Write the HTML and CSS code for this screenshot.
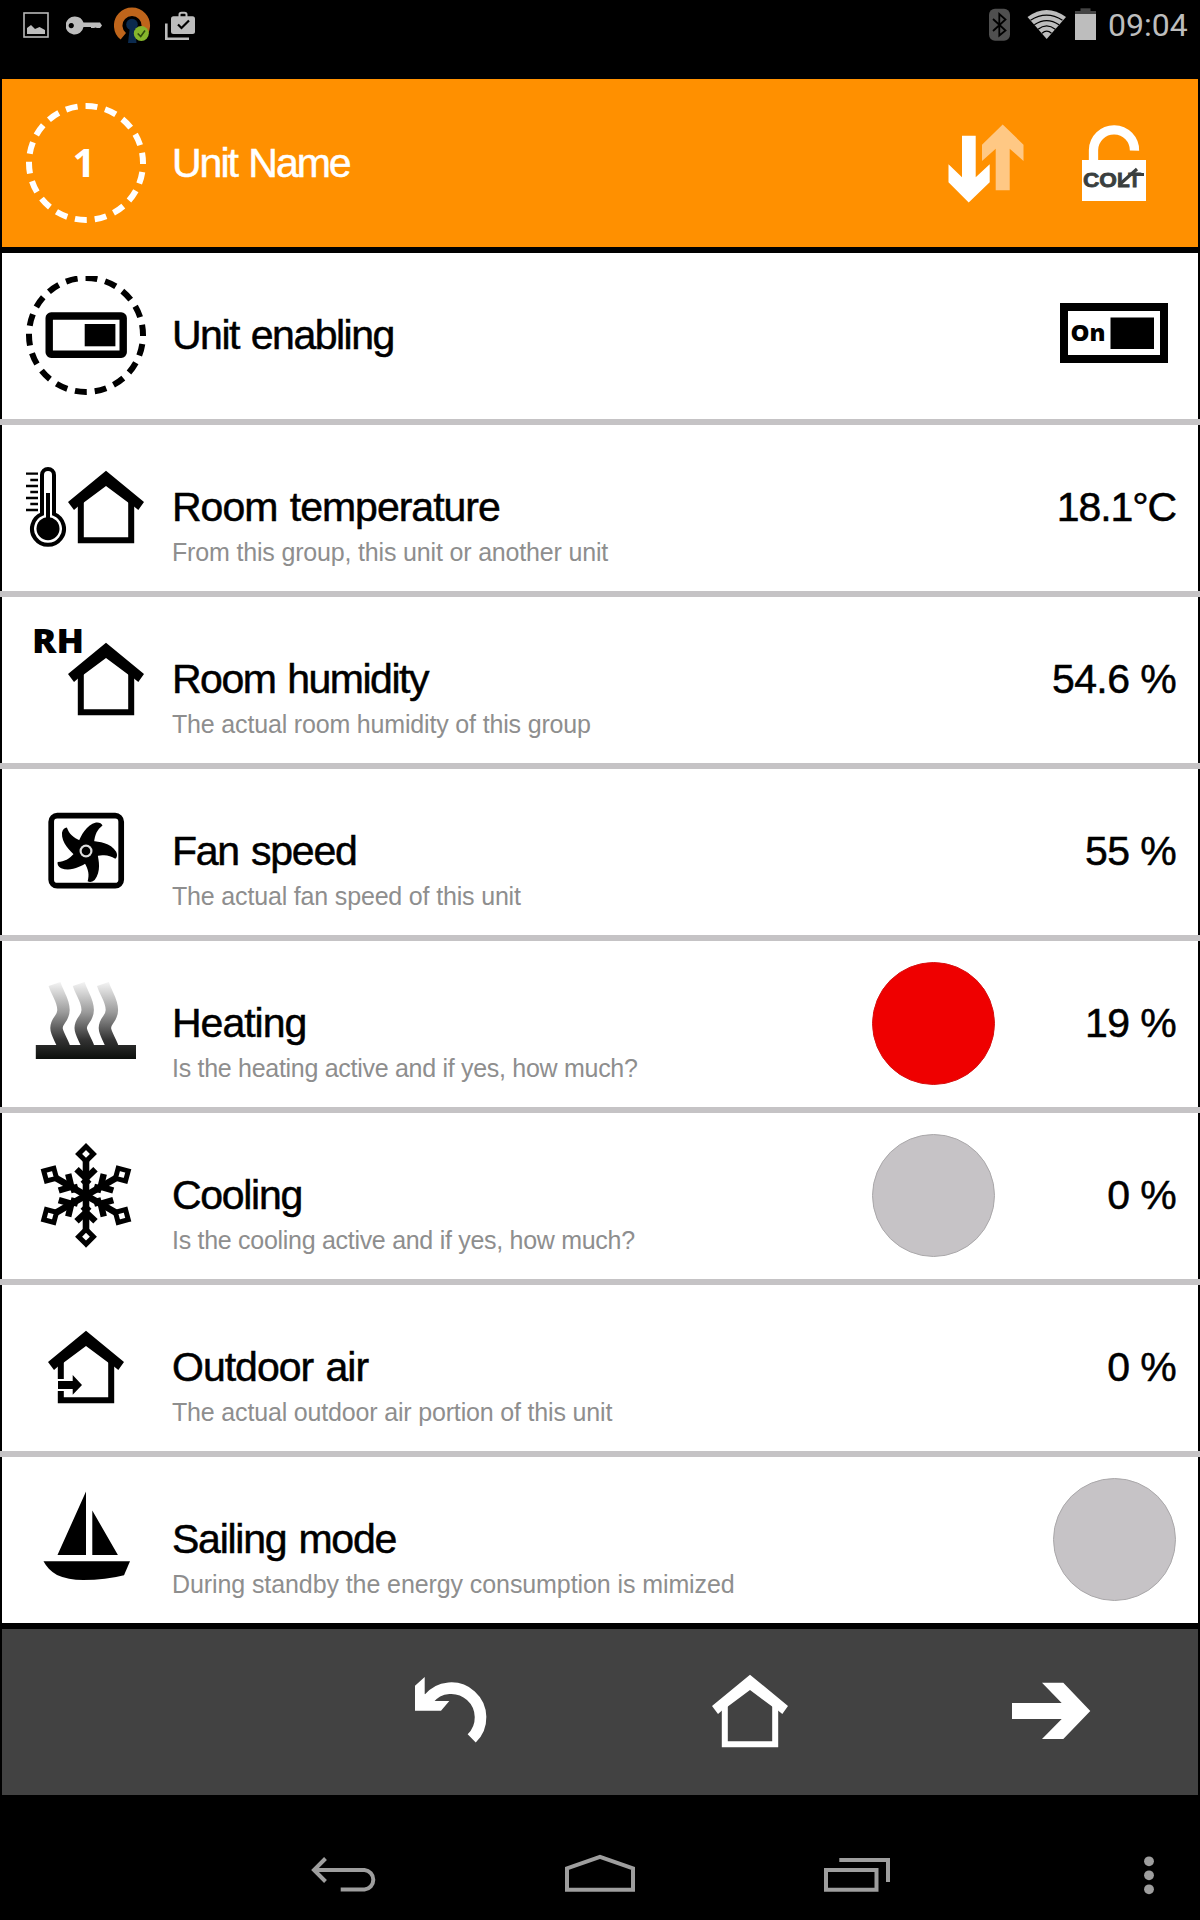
FILE: index.html
```html
<!DOCTYPE html>
<html lang="en">
<head>
  <meta charset="UTF-8" />
  <meta name="viewport" content="width=device-width, initial-scale=1" />
  <title>Unit Name</title>
  <link rel="stylesheet" href="styles.css">
</head>
<body>
  <!-- shared shapes -->
  <svg class="defs" width="0" height="0">
    <defs>
      <g id="roof">
        <path d="M80 22.7 L118 54 L112.3 62 L108 58.5 L102.8 55 L80 38 L57.2 55 L52 58.5 L48 62 L42 54 Z" />
      </g>
      <g id="house">
        <use href="#roof" />
        <path d="M54.8 53 V92.2 H105.2 V53" fill="none" stroke="currentColor" stroke-width="6" />
      </g>
      <path id="blade" d="M-7.5 -9 C-5 -15 0 -26 10 -28.5 Q15 -29 16.5 -25.5 C11 -21 9 -17 8 -8 L0 0 Z" />
      <g id="arm" fill="none" stroke="currentColor">
        <path d="M0 0 V-35" stroke-width="6.6" />
        <path d="M-9.5 -26 L0 -17 L9.5 -26" stroke-width="6.4" />
        <path d="M-3 -16 L0 -13 L3 -16" stroke-width="7" />
        <path d="M0 -48.8 L7.4 -41.4 L0 -34 L-7.4 -41.4 Z" stroke-width="5" />
      </g>
      <linearGradient id="heat" gradientUnits="userSpaceOnUse" x1="0" y1="18" x2="0" y2="95">
        <stop offset="0" stop-color="#f4f4f4" />
        <stop offset="0.4" stop-color="#999" />
        <stop offset="0.75" stop-color="#333" />
        <stop offset="1" stop-color="#0c0f0c" />
      </linearGradient>
    </defs>
  </svg>

  <div class="status-bar">
    <svg class="photo" width="26" height="50" viewBox="23 0 26 50">
      <rect x="24" y="13" width="24" height="24" fill="none" stroke="#b8b8b8" stroke-width="1.6" />
      <path d="M27 34 V28 L31 25 L35 29 L39.5 27 L45 30 V34 Z" fill="#bdbdbd" />
    </svg>
    <svg class="key" width="37" height="50" viewBox="66 0 37 50">
      <path fill="#bdbdbd" fill-rule="evenodd" d="M75 16.5 A9 9 0 0 1 83.5 22.5 H100 L102 25.5 L100 28 H97 L95.5 27.5 L94 28 H91 V27 H83.5 A9 9 0 1 1 75 16.5 Z M71.2 23 A2.6 2.6 0 1 0 71.3 23 Z" />
    </svg>
    <svg class="vpn" width="37" height="50" viewBox="114 0 37 50">
      <path d="M123.3 36.3 A13.8 13.8 0 1 1 140.7 36.3" fill="none" stroke="#bf651b" stroke-width="8.5" />
      <circle cx="132" cy="24.5" r="5.8" fill="#0b2a4e" />
      <path d="M130 26 H134.5 L136.5 43 H128 Z" fill="#0b2a4e" />
      <circle cx="141.3" cy="33.5" r="7.5" fill="#85b52c" />
      <path d="M137.7 33.5 L140.7 36.5 L145 30.5" fill="none" stroke="#2f4a0c" stroke-width="1.6" />
    </svg>
    <svg class="bag" width="31" height="50" viewBox="165 0 31 50">
      <path d="M166.3 23.5 V38.7 H189" fill="none" stroke="#bdbdbd" stroke-width="2.6" />
      <path d="M179.5 17 V14.5 Q179.5 12.7 181.5 12.7 H184.5 Q186.5 12.7 186.5 14.5 V17" fill="none" stroke="#bdbdbd" stroke-width="2" />
      <rect x="171" y="16.3" width="24" height="17.7" rx="2.5" fill="#bdbdbd" />
      <path d="M178 24.5 L181.5 28 L189 20.5" fill="none" stroke="#000" stroke-width="2.2" />
    </svg>
    <div class="status-right">
      <svg class="bt" width="21" height="50" viewBox="989 0 21 50">
        <rect x="989" y="8.7" width="21" height="32" rx="6" fill="#4f4f4f" />
        <path d="M993 19 L1005.5 30.5 L999.3 35.5 V14 L1005.5 19.5 L993 31" fill="none" stroke="#000" stroke-width="1.8" />
      </svg>
      <svg class="wifi" width="39" height="50" viewBox="1027 0 39 50">
        <path d="M1027.5 17 Q1046.5 3 1066 17 L1046.7 39 Z" fill="#bdbdbd" />
        <path d="M1030.5 20.2 Q1046.600 10 1062.5 20.2 M1034.3 24.8 Q1046.7 16.5 1059 24.8 M1038 29.2 Q1046.7 22.5 1055.3 29.2 M1042 33.3 Q1046.7 29 1051.5 33.3" fill="none" stroke="#000" stroke-width="1.3" />
      </svg>
      <svg class="battery" width="21" height="50" viewBox="1075 0 21 50">
        <rect x="1080.5" y="8.3" width="10" height="4" fill="#444" />
        <rect x="1075" y="11" width="21" height="3" fill="#444" />
        <rect x="1075" y="14" width="21" height="26" fill="#bdbdbd" />
      </svg>
      <span class="clock">09:04</span>
    </div>
  </div>

  <div class="app">
    <div class="header">
      <svg class="icon" viewBox="0 0 120 120">
        <circle cx="60" cy="60" r="57" fill="none" stroke="#fff" stroke-width="6" stroke-dasharray="11.9 8" stroke-dashoffset="10.9" />
        <text x="58" y="74" class="unit-no">1</text>
      </svg>
      <h1 class="t-name">Unit Name</h1>
      <svg class="arrows" viewBox="0 0 76 79">
        <path fill="#ffc884" d="M54.7 0.5 L75.5 20.7 V37 L61.7 24.7 V66.3 H47.7 V24.7 L34 37 V20.7 Z" />
        <path fill="#fff" d="M14 11.7 H27.7 V53.3 L41.7 40.3 V58.3 L20.7 78.5 L0.5 58.3 V40.3 L14 53.3 Z" />
      </svg>
      <svg class="lock" viewBox="0 0 64 76">
        <path d="M11.5 37 V25 A20.5 20.5 0 0 1 52.5 25.7" fill="none" stroke="#fff" stroke-width="9.3" />
        <rect y="35" width="64" height="41" fill="#fff" />
        <text x="1" y="61.500" class="lock-text" textLength="34" lengthAdjust="spacingAndGlyphs">CO</text>
        <text x="35" y="61.5" class="lock-text" textLength="24" lengthAdjust="spacingAndGlyphs">LT</text>
        <path d="M37 60 L55 44 M49 49.500 H62" fill="none" stroke="#3a3f3f" stroke-width="3.2" />
      </svg>
    </div>

    <div class="row">
      <svg class="icon" viewBox="0 0 120 120">
        <circle cx="60" cy="59" r="57" fill="none" stroke="#000" stroke-width="6" stroke-dasharray="11.9 8" stroke-dashoffset="10.9" />
        <rect x="23.2" y="40" width="74" height="38.3" rx="2" fill="none" stroke="#000" stroke-width="7.4" />
        <rect x="58.7" y="48" width="30.7" height="22.3" />
      </svg>
      <div class="label"><h2 class="t-enabling">Unit enabling</h2></div>
      <svg class="toggle" viewBox="0 0 108 60">
        <rect x="4" y="4" width="100" height="52" fill="#fff" stroke="#000" stroke-width="8" />
        <text x="10.500" y="38" class="toggle-text" textLength="35" lengthAdjust="spacingAndGlyphs">On</text>
        <rect x="50.5" y="14.5" width="43.5" height="31.5" />
      </svg>
    </div>
    <div class="line"></div>

    <div class="row">
      <svg class="icon" viewBox="0 0 120 120">
        <path d="M0 25.7 H12 M4.3 32 H12 M0 38 H12 M4.3 44 H12 M0 50 H12 M4.3 56 H12 M0 62 H12" stroke="#000" stroke-width="2.3" />
        <path d="M16 66 V27 A6 6 0 0 1 28 27 V66 A16 16 0 1 1 16 66 Z" fill="none" stroke="#000" stroke-width="4" />
        <circle cx="22" cy="80.7" r="11.500" />
        <rect x="20" y="45" width="4" height="30" />
        <use href="#house" />
      </svg>
      <div class="label">
        <h2 class="t-temp">Room temperature</h2>
        <p>From this group, this unit or another unit</p>
      </div>
      <span class="value value-temp">18.1°C</span>
    </div>
    <div class="line"></div>

    <div class="row">
      <svg class="icon" viewBox="0 0 120 120">
        <text x="6" y="32.7" class="rh" textLength="52" lengthAdjust="spacingAndGlyphs">RH</text>
        <use href="#house" />
      </svg>
      <div class="label">
        <h2 class="t-humidity">Room humidity</h2>
        <p>The actual room humidity of this group</p>
      </div>
      <span class="value">54.6 %</span>
    </div>
    <div class="line"></div>

    <div class="row">
      <svg class="icon" viewBox="0 0 120 120">
        <rect x="25.2" y="23.7" width="70" height="70" rx="6" fill="none" stroke="#000" stroke-width="5.7" />
        <g transform="translate(60 59)">
          <use href="#blade" />
          <use href="#blade" transform="rotate(72)" />
          <use href="#blade" transform="rotate(144)" />
          <use href="#blade" transform="rotate(216)" />
          <use href="#blade" transform="rotate(288)" />
          <circle r="10" />
          <circle r="6.5" fill="#ddd" />
          <circle r="4.3" />
        </g>
      </svg>
      <div class="label">
        <h2 class="t-fan">Fan speed</h2>
        <p>The actual fan speed of this unit</p>
      </div>
      <span class="value">55 %</span>
    </div>
    <div class="line"></div>

    <div class="row">
      <svg class="icon" viewBox="0 0 120 120">
        <g fill="none" stroke="url(#heat)" stroke-width="12.4">
          <path d="M28.5 20 C32 31 37.500 36 37.5 46 C37.5 55 30.5 56 30.5 64 C30.5 69 35 75 38 83" />
          <path d="M52.7 20 C56.200 31 61.7 36 61.7 46 C61.7 55 54.7 56 54.7 64 C54.7 69 59.2 75 62.2 83" />
          <path d="M76.9 20 C80.4 31 85.9 36 85.9 46 C85.9 55 78.9 56 78.9 64 C78.9 69 83.4 75 86.4 83" />
        </g>
        <rect x="9.8" y="81" width="100.2" height="14" fill="url(#heat)" />
      </svg>
      <div class="label">
        <h2 class="t-heating">Heating</h2>
        <p class="wide">Is the heating active and if yes, how much?</p>
      </div>
      <span class="lamp lamp-red"></span>
      <span class="value">19 %</span>
    </div>
    <div class="line"></div>

    <div class="row">
      <svg class="icon" viewBox="0 0 120 120">
        <g transform="translate(60 59.3)">
          <use href="#arm" />
          <use href="#arm" transform="rotate(60)" />
          <use href="#arm" transform="rotate(120)" />
          <use href="#arm" transform="rotate(180)" />
          <use href="#arm" transform="rotate(240)" />
          <use href="#arm" transform="rotate(300)" />
        </g>
      </svg>
      <div class="label">
        <h2 class="t-cooling">Cooling</h2>
        <p class="wide">Is the cooling active and if yes, how much?</p>
      </div>
      <span class="lamp"></span>
      <span class="value">0 %</span>
    </div>
    <div class="line"></div>

    <div class="row">
      <svg class="icon" viewBox="0 0 120 120">
        <g transform="translate(-20 0)">
          <use href="#roof" />
          <path d="M54.8 53 V71 M54.8 83 V92.2 H105.2 V53" fill="none" stroke="#000" stroke-width="6" />
        </g>
        <path d="M32 73 H46.7 V67 L56 77 L46.7 86.7 V81 H32 Z" />
      </svg>
      <div class="label">
        <h2 class="t-outdoor">Outdoor air</h2>
        <p>The actual outdoor air portion of this unit</p>
      </div>
      <span class="value">0 %</span>
    </div>
    <div class="line"></div>

    <div class="row">
      <svg class="icon" viewBox="0 0 120 120">
        <path d="M60 11.5 V75 H31.5 Z M66.3 30.5 L91.9 75 H66.3 Z" />
        <path d="M17.5 81.300 H104 L98 95.3 Q80 100 57.3 100 Q42 100 31 95 Q22 90 17.5 81.3 Z" />
      </svg>
      <div class="label">
        <h2 class="t-sailing">Sailing mode</h2>
        <p class="narrow">During standby the energy consumption is mimized</p>
      </div>
      <span class="lamp"></span>
    </div>

    <div class="footer">
      <span></span>
      <svg viewBox="0 0 80 80">
        <path d="M5 13.7 L14.7 5 V22 L22.7 29 H39.3 L31 38.7 H5 Z" />
        <path d="M18.3 27.2 A29.3 29.3 0 1 1 61.7 66.4" fill="none" stroke="#fff" stroke-width="11.6" />
      </svg>
      <svg viewBox="0 0 80 80">
        <use href="#house" transform="translate(-40 -20)" />
      </svg>
      <svg viewBox="0 0 80 80">
        <path d="M2 31 H51.7 L32 10.7 H53.3 L80.3 39 L53.3 67 H32 L51.7 47 H2 Z" />
      </svg>
    </div>
  </div>

  <div class="nav-bar">
    <svg width="66" height="44" viewBox="311 1852 66 44">
      <path d="M325.5 1858.5 L314 1870 L325.5 1881.5 M314 1870 H364.5 A9.8 9.8 0 0 1 364.5 1889.5 H340.7" />
    </svg>
    <svg width="72" height="44" viewBox="564 1852 72 44">
      <path d="M567 1889.7 V1868.3 L600 1856.8 L633 1868.3 V1889.7 Z" />
    </svg>
    <svg width="68" height="44" viewBox="823 1852 68 44">
      <path d="M827 1870 H877.5 V1889.7 H827 Z M840.3 1860 H889 V1882" />
    </svg>
    <svg class="dots" width="12" height="44" viewBox="1143 1852 12 44">
      <circle cx="1149" cy="1861.3" r="4.9" />
      <circle cx="1149" cy="1875.3" r="4.9" />
      <circle cx="1149" cy="1889.3" r="4.9" />
    </svg>
  </div>
</body>
</html>
```
FILE: styles.css
```css
* {
  box-sizing: border-box;
}
body {
  margin: 0;
  width: 1200px;
  height: 1920px;
  background-color: #000;
  font-family: "Liberation Sans", Arial, sans-serif;
  overflow: hidden;
}
svg {
  display: block;
  flex: none;
}
.defs {
  position: absolute;
}

/* status bar */
.status-bar {
  display: flex;
  height: 79px;
  padding: 0 11px 0 23px;
}
.key {
  margin-left: 17px;
}
.vpn {
  margin-left: 11px;
}
.bag {
  margin-left: 14px;
}
.status-right {
  display: flex;
  margin-left: auto;
}
.wifi {
  margin-left: 17px;
}
.battery {
  margin-left: 9px;
}
.clock {
  width: 81px;
  margin-left: 12px;
  font-family: Roboto, sans-serif;
  font-size: 32px;
  line-height: 51px;
  color: #bdbdbd;
  white-space: nowrap;
}

/* list */
.header {
  display: flex;
  align-items: center;
  height: 168px;
  margin: 0 2px 6px;
  padding: 0 52px 0 24px;
  background-color: #ff9000;
}
.row {
  display: flex;
  align-items: center;
  height: 166px;
  margin: 0 2px;
  padding: 0 22px 0 24px;
  background-color: #fff;
}
.line {
  height: 6px;
  background-color: #c5c3c5;
}
.icon {
  width: 120px;
  height: 120px;
}
.unit-no {
  font-family: "Open Sans", sans-serif;
  font-size: 40px;
  font-weight: bold;
  fill: #fff;
  text-anchor: middle;
}
.label {
  position: relative;
  flex: 1;
}
h1, h2 {
  margin: 0 0 2px 26px;
  font-size: 41px;
  line-height: 46px;
  font-weight: normal;
  word-spacing: 2px;
  white-space: nowrap;
  -webkit-text-stroke: 0.5px;
}
h1 {
  flex: 1;
  margin-bottom: 0;
  color: #fff;
}
.label p {
  position: absolute;
  top: 54px;
  left: 26px;
  margin: 0;
  font-size: 25px;
  line-height: 28px;
  letter-spacing: -0.17px;
  color: #8e8e8e;
  white-space: nowrap;
}
.label .wide {
  letter-spacing: -0.29px;
}
.label .narrow {
  letter-spacing: -0.09px;
}
.t-name {
  letter-spacing: -2px;
}
.t-enabling, .t-humidity {
  letter-spacing: -1.5px;
}
.t-temp {
  letter-spacing: -1px;
}
.t-fan, .t-sailing {
  letter-spacing: -1.25px;
}
.t-heating, .t-outdoor {
  letter-spacing: -1px;
}
.t-cooling {
  letter-spacing: -1.3px;
}
.value {
  width: 181px;
  padding-bottom: 2px;
  font-size: 41px;
  line-height: 46px;
  letter-spacing: -0.6px;
  text-align: right;
  -webkit-text-stroke: 0.5px;
}
.value-temp {
  letter-spacing: -1.1px;
}
.lamp {
  width: 123px;
  height: 123px;
  margin-bottom: 2px;
  border-radius: 50%;
  border: 1px solid #aaa8aa;
  background-color: #c6c3c6;
}
.lamp-red {
  border-color: #d81010;
  background-color: #ef0000;
}
.toggle {
  width: 108px;
  height: 60px;
  margin: 0 8px 6px 0;
}
.toggle-text {
  font-family: "Open Sans", sans-serif;
  font-size: 23px;
  font-weight: 800;
}
.rh {
  font-family: "Open Sans", sans-serif;
  font-size: 33px;
  font-weight: 800;
}
.arrows {
  width: 76px;
  height: 79px;
  margin-right: 58px;
}
.lock {
  width: 64px;
  height: 76px;
}
.lock-text {
  font-size: 21px;
  font-weight: bold;
  fill: #3a3f3f;
  stroke: #3a3f3f;
  stroke-width: 0.8px;
}

/* bottom menu */
.footer {
  display: grid;
  grid-template-columns: repeat(4, 300px);
  justify-content: center;
  align-items: center;
  justify-items: center;
  height: 166px;
  margin: 6px 2px 0;
  background-color: #424242;
}
.footer svg {
  width: 80px;
  height: 80px;
  fill: #fff;
  color: #fff;
  overflow: visible;
}

/* android buttons */
.nav-bar {
  display: grid;
  grid-template-columns: 256px 256px 256px 1fr;
  justify-items: center;
  padding: 57px 45px 0 216px;
}
.nav-bar svg {
  fill: none;
  stroke: #9e9e9e;
  stroke-width: 4;
}
.nav-bar .dots {
  justify-self: end;
  fill: #9e9e9e;
  stroke: none;
}
```
